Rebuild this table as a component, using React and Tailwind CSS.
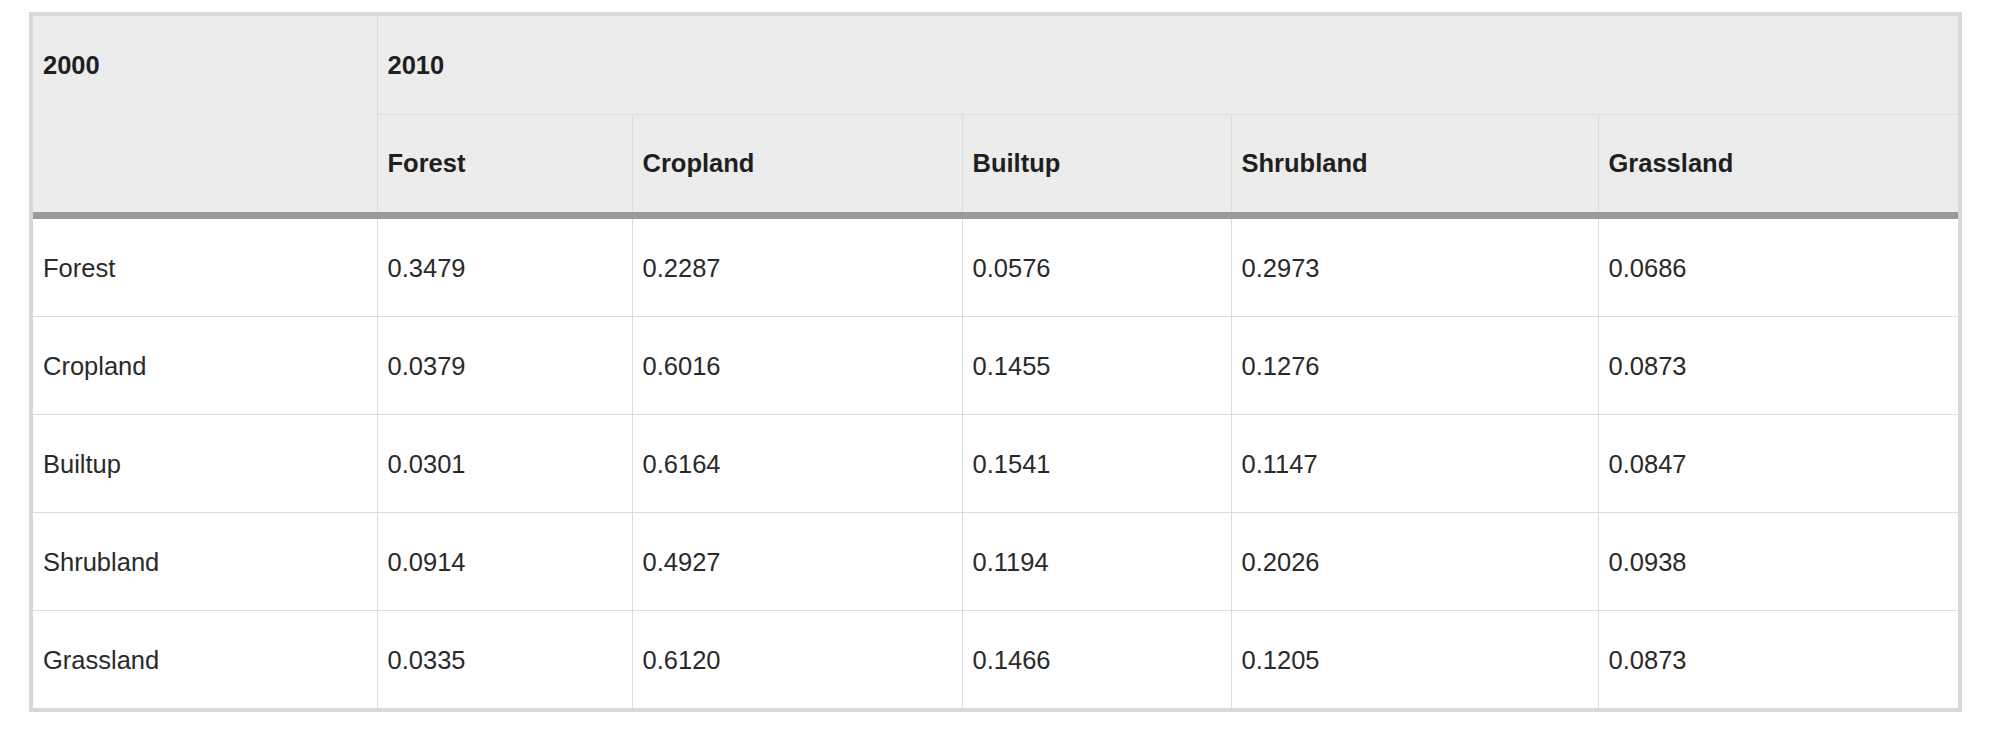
import React from "react";

const years = ["Forest", "Cropland", "Builtup", "Shrubland", "Grassland"];

const rows = [
  { name: "Forest", values: ["0.3479", "0.2287", "0.0576", "0.2973", "0.0686"] },
  { name: "Cropland", values: ["0.0379", "0.6016", "0.1455", "0.1276", "0.0873"] },
  { name: "Builtup", values: ["0.0301", "0.6164", "0.1541", "0.1147", "0.0847"] },
  { name: "Shrubland", values: ["0.0914", "0.4927", "0.1194", "0.2026", "0.0938"] },
  { name: "Grassland", values: ["0.0335", "0.6120", "0.1466", "0.1205", "0.0873"] },
];

const colWidths = ["w-[344px]", "w-[255px]", "w-[330px]", "w-[269px]", "w-[367px]", "w-[360px]"];

const App = () => {
  return (
    <div
      className="w-[1999px] h-[730px] bg-white pl-[29px] pt-[12px]"
      style={{ fontFamily: '"Liberation Sans", Arial, sans-serif' }}
    >
      <div className="w-[1933px] border-4 border-[#d8d8d8]">
        <table className="w-full table-fixed border-collapse text-[25.5px] leading-[38px]">
          <colgroup>
            {colWidths.map((w, i) => (
              <col key={i} className={w} />
            ))}
          </colgroup>
          <thead className="bg-[#ececec] text-[#1f1f1f]">
            <tr>
              <th
                rowSpan={2}
                className="align-top text-left font-bold px-[10px] pt-[30px] border-r border-r-[#dcdcdc] border-b-[7px] border-b-[#9a9a9a]"
              >
                2000
              </th>
              <th
                colSpan={5}
                className="text-left font-bold px-[10px] py-[30px] border-b border-b-[#dcdcdc]"
              >
                2010
              </th>
            </tr>
            <tr>
              {years.map((y, i) => (
                <th
                  key={y}
                  className={
                    "text-left font-bold px-[10px] pt-[29px] pb-[30px] border-b-[7px] border-b-[#9a9a9a] " +
                    (i < years.length - 1 ? "border-r border-r-[#dcdcdc]" : "")
                  }
                >
                  {y}
                </th>
              ))}
            </tr>
          </thead>
          <tbody className="text-[#2a2a2a]">
            {rows.map((row, r) => (
              <tr key={row.name}>
                {[row.name, ...row.values].map((cell, i) => (
                  <td
                    key={i}
                    className={
                      "text-left px-[10px] py-[29.5px] " +
                      (i < 5 ? "border-r border-r-[#dcdcdc] " : "") +
                      (r < rows.length - 1 ? "border-b border-b-[#dcdcdc]" : "")
                    }
                  >
                    {cell}
                  </td>
                ))}
              </tr>
            ))}
          </tbody>
        </table>
      </div>
    </div>
  );
};

export default App;
